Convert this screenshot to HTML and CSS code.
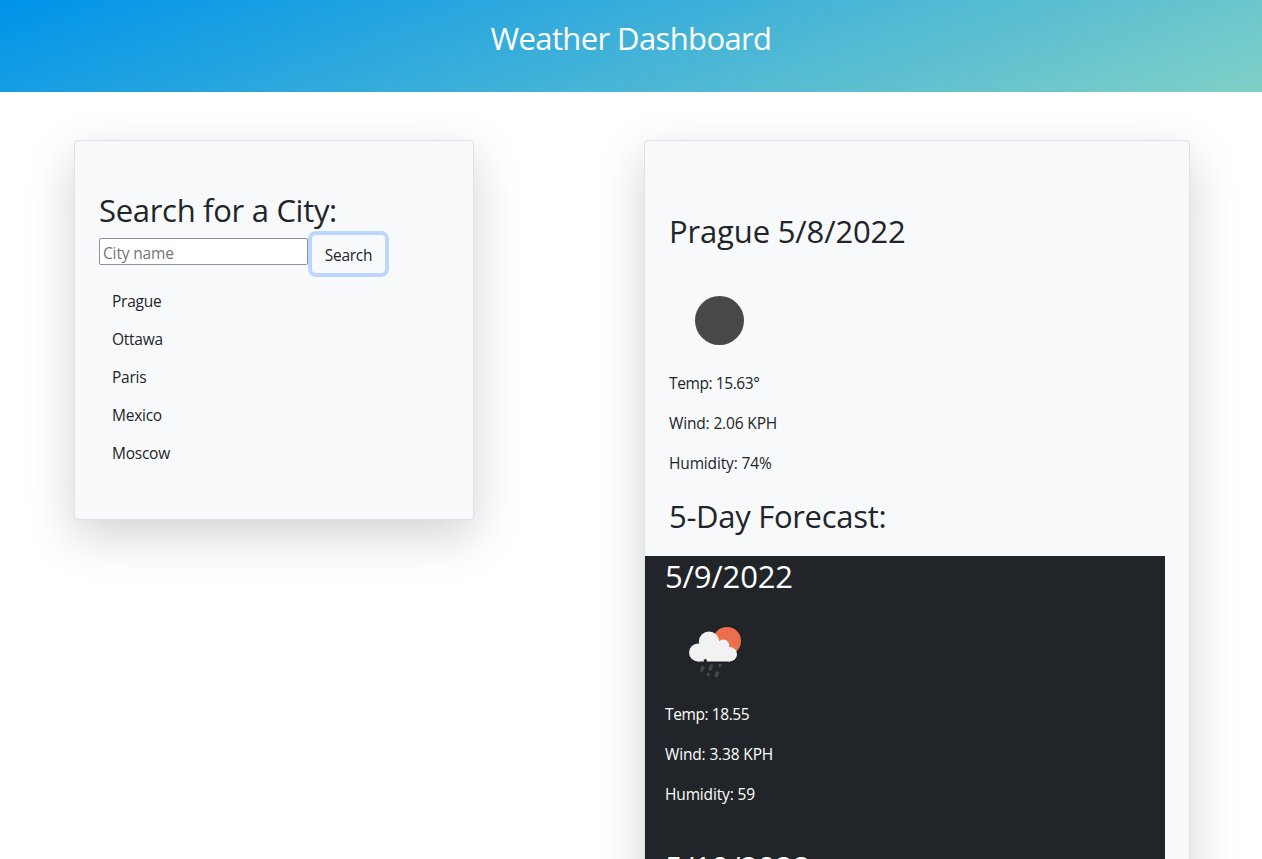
FILE: index.html
```html
<!DOCTYPE html>
<html lang="en">
<head>
<meta charset="utf-8">
<title>Weather Dashboard</title>
<link rel="stylesheet" href="styles.css">
</head>
<body>
<header class="header"><h2 class="heading title">Weather Dashboard</h2></header>
<main class="layout">
  <section class="card search">
    <h2 class="heading search-title">Search for a City:</h2>
    <form class="search-form">
      <input class="city-input" type="text" placeholder="City name">
      <button class="search-btn" type="button">Search</button>
    </form>
    <div class="history">
      <button class="city" type="button">Prague</button>
      <button class="city" type="button">Ottawa</button>
      <button class="city" type="button">Paris</button>
      <button class="city" type="button">Mexico</button>
      <button class="city" type="button">Moscow</button>
    </div>
  </section>
  <section class="card weather">
    <h2 class="heading date current-title">Prague 5/8/2022</h2>
    <svg class="icon" viewBox="0 0 100 100"><circle cx="50.5" cy="50.5" r="24.5" fill="#48484a"/></svg>
    <p class="stat temp">Temp: 15.63°</p>
    <p class="stat">Wind: 2.06 KPH</p>
    <p class="stat">Humidity: 74%</p>
    <h2 class="heading forecast-title">5-Day Forecast:</h2>
    <div class="forecast">
      <article class="day">
        <h2 class="heading date">5/9/2022</h2>
        <svg class="icon" viewBox="0 0 100 100">
          <circle cx="62" cy="39" r="14" fill="#ec6e4c"/>
          <g fill="#f2f2f2">
            <circle cx="33" cy="50.5" r="9"/><circle cx="44" cy="39.8" r="10.2"/>
            <circle cx="58.3" cy="43.4" r="6"/><circle cx="64.8" cy="52.2" r="7.2"/>
            <path d="M33 42h12l16 1 4 8v8.5H33z"/>
          </g>
          <circle cx="40.3" cy="58.7" r="1.7" fill="#222529"/>
          <g stroke="#48484a" stroke-width="3.3" stroke-linecap="round">
            <path d="M37.8 65.5l-1.2 2.7M46.4 64l-1.3 3M52.4 71l-1.2 2.8M55 63.5v.1M43.3 72.5v.1"/>
          </g>
        </svg>
        <p class="stat temp">Temp: 18.55</p>
        <p class="stat">Wind: 3.38 KPH</p>
        <p class="stat">Humidity: 59</p>
      </article>
      <article class="day">
        <h2 class="heading date">5/10/2022</h2>
      </article>
    </div>
  </section>
</main>
</body>
</html>
```
FILE: styles.css
```css
* { box-sizing: border-box; }
html { height: 100%; overflow: hidden; }
body {
  margin: 0;
  height: 859px;
  overflow: hidden;
  background: #fff;
  color: #212529;
  font: 15.5px/24px "Open Sans", "Noto Sans", sans-serif;
  letter-spacing: -0.25px;
}
.heading { margin: 0; font-size: 31px; line-height: 38px; font-weight: 400; letter-spacing: -0.3px; }
.title { letter-spacing: -0.62px; }
.date { letter-spacing: -0.15px; }
.header {
  height: 92px;
  padding-top: 19px;
  text-align: center;
  color: #fff;
  background: linear-gradient(160deg, #0093e9 0%, #80d0c7 100%);
}
.layout { display: flex; align-items: flex-start; gap: 170px; padding: 48px 72px 0 74px; }
.card {
  border: 1px solid #dee2e6;
  border-radius: 4px;
  background: #f8f9fb;
  box-shadow: 0 16px 48px rgba(0, 0, 0, .175);
}
.search { width: 400px; height: 380px; padding: 50px 24px 0; }
.search-form { display: flex; align-items: flex-start; gap: 4px; height: 38px; margin-top: 6px; }
.city-input {
  width: 209px;
  height: 27px;
  margin-top: 3px;
  padding: 2px 3px 0;
  border: 1px solid #8f8f9d;
  border-radius: 2px;
  background: #fff;
  font: inherit;
  letter-spacing: -0.15px;
}
.city-input::placeholder { color: #757575; opacity: 1; }
.search-btn {
  width: 73px;
  height: 38px;
  padding: 1px 0 0;
  border: 0;
  border-radius: 4px;
  background: #f8f9fb;
  color: #212529;
  font: inherit;
  letter-spacing: -0.3px;
  box-shadow: 0 0 0 4px #bdd6fd;
}
.history { display: flex; flex-direction: column; align-items: flex-start; margin-top: 9px; }
.city { height: 38px; padding: 0 13px; border: 0; background: none; color: inherit; font: inherit; letter-spacing: inherit; }
.weather { width: 546px; height: 900px; padding: 71px 24px 0; }
.icon { display: block; width: 100px; height: 100px; }
.current-title { margin-bottom: 20px; }
.weather > .icon { margin-bottom: 1px; }
.stat { margin: 0 0 16px; letter-spacing: -0.15px; }
.temp { letter-spacing: -0.4px; }
.forecast-title { margin-top: 22px; }
.forecast { margin: 21px 0 0 -24px; color: #fff; background: #212529; }
.day { height: 291px; padding: 1px 0 0 20px; }
.day .icon { margin: 7px 0 0; }
```
